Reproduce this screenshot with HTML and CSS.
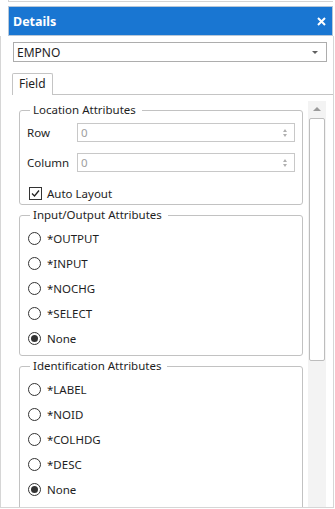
FILE: index.html
```html
<!DOCTYPE html>
<html lang="en">
<head>
    <meta charset="UTF-8">
    <meta name="viewport" content="width=device-width, initial-scale=1.0">
    <title>Details</title>
    <link rel="stylesheet" href="styles.css">
</head>
<body>
    <div class="window">
        <div class="top-strip"></div>

        <!-- Title bar -->
        <div class="titlebar">
            <span class="title">Details</span>
            <svg class="close" width="9" height="9" viewBox="0 0 9 9">
                <path d="M1 1 L8 8 M8 1 L1 8" stroke="#fff" stroke-width="2" fill="none"/>
            </svg>
        </div>

        <div class="panel">
            <div class="select">
                <span>EMPNO</span>
                <span class="select-arrow"></span>
            </div>

            <div class="tabs">
                <div class="tab">Field</div>
                <div class="tab-fill"></div>
            </div>

            <div class="tab-body">
                <div class="groups">
                    <fieldset class="group">
                        <legend>Location Attributes</legend>
                        <div class="field-row">
                            <span class="field-label">Row</span>
                            <div class="spin">
                                <span>0</span>
                                <span class="spin-arrows"><i class="up"></i><i class="down"></i></span>
                            </div>
                        </div>
                        <div class="field-row">
                            <span class="field-label">Column</span>
                            <div class="spin">
                                <span>0</span>
                                <span class="spin-arrows"><i class="up"></i><i class="down"></i></span>
                            </div>
                        </div>
                        <div class="check-row">
                            <span class="checkbox">
                                <svg width="11" height="11" viewBox="0 0 11 11">
                                    <path d="M2 5.5 L4.5 8 L9 2.5" stroke="#222" stroke-width="1.3" fill="none"/>
                                </svg>
                            </span>
                            <span>Auto Layout</span>
                        </div>
                    </fieldset>

                    <fieldset class="group">
                        <legend>Input/Output Attributes</legend>
                        <div class="radio-row"><span class="radio"></span>*OUTPUT</div>
                        <div class="radio-row"><span class="radio"></span>*INPUT</div>
                        <div class="radio-row"><span class="radio"></span>*NOCHG</div>
                        <div class="radio-row"><span class="radio"></span>*SELECT</div>
                        <div class="radio-row"><span class="radio checked"></span>None</div>
                    </fieldset>

                    <fieldset class="group">
                        <legend>Identification Attributes</legend>
                        <div class="radio-row"><span class="radio"></span>*LABEL</div>
                        <div class="radio-row"><span class="radio"></span>*NOID</div>
                        <div class="radio-row"><span class="radio"></span>*COLHDG</div>
                        <div class="radio-row"><span class="radio"></span>*DESC</div>
                        <div class="radio-row"><span class="radio checked"></span>None</div>
                        <div class="radio-row"></div>
                    </fieldset>
                </div>

                <div class="scrollbar">
                    <div class="scroll-up"></div>
                    <div class="scroll-thumb"></div>
                </div>
            </div>
        </div>
    </div>
</body>
</html>
```

FILE: styles.css
```css
* {
    box-sizing: border-box;
}

body {
    margin: 0;
    background: #fff;
    font-family: "Noto Sans", "Open Sans", sans-serif;
    font-size: 11.5px;
    color: #1e1e1e;
}

.window {
    width: 335px;
    height: 509px;
    overflow: hidden;
}

.top-strip {
    margin-left: 8px;
    width: 325px;
    height: 2px;
    border-left: 1px solid #d4d4d4;
    border-bottom: 1px solid #d4d4d4;
}

.titlebar {
    margin: 4px 2px 0 8px;
    height: 30px;
    background: #1976d2;
    border: 1px solid #b7c7d8;
    display: flex;
    align-items: center;
    justify-content: space-between;
    padding: 0 6px 0 4px;
}

.title {
    color: #fff;
    font-weight: bold;
    font-size: 12.5px;
}

.panel {
    width: 334px;
    height: 472px;
    border: 1px solid #d6d6d6;
    border-top: none;
    padding-top: 6px;
}

.select {
    margin-left: 12px;
    width: 314px;
    height: 20px;
    border: 1px solid #adadad;
    display: flex;
    align-items: center;
    justify-content: space-between;
    padding: 0 8px 0 3px;
    font-size: 12px;
}

.select-arrow {
    width: 0;
    height: 0;
    border-left: 3px solid transparent;
    border-right: 3px solid transparent;
    border-top: 3px solid #606060;
}

.tabs {
    margin-top: 11px;
    margin-left: 11px;
    height: 22px;
    display: flex;
}

.tab {
    width: 41px;
    height: 22px;
    border: 1px solid #c4c4c4;
    border-bottom: none;
    border-radius: 2px 2px 0 0;
    padding: 2px 0 0 6px;
    line-height: 16px;
    font-size: 12px;
}

.tab-fill {
    flex: 1;
    border-bottom: 1px solid #c4c4c4;
}

.tab-body {
    display: flex;
    height: 412px;
    padding-left: 18px;
    overflow: hidden;
}

.groups {
    width: 284px;
    padding-top: 7px;
}

.group {
    margin: 0 0 2px 0;
    border: 1px solid #c2c2c2;
    border-radius: 3px;
    padding: 5px 7px 4px 7px;
}

.group legend {
    margin-left: 3px;
    padding: 0 6px 0 3px;
    line-height: 16px;
}

.field-row {
    display: flex;
    align-items: center;
    height: 19px;
    margin-bottom: 11px;
}

.field-label {
    width: 50px;
}

.spin {
    flex: 1;
    height: 19px;
    border: 1px solid #c8c8c8;
    display: flex;
    align-items: center;
    justify-content: space-between;
    padding: 0 7px 0 3px;
    color: #a0a0a0;
}

.spin-arrows {
    display: flex;
    flex-direction: column;
    gap: 2px;
}

.spin-arrows i {
    width: 0;
    height: 0;
    border-left: 2.5px solid transparent;
    border-right: 2.5px solid transparent;
}

.spin-arrows .up {
    border-bottom: 3px solid #b0b0b0;
}

.spin-arrows .down {
    border-top: 3px solid #b0b0b0;
}

.check-row {
    display: flex;
    align-items: center;
    gap: 5px;
    height: 13px;
    margin-top: 15px;
    padding-left: 2px;
}

.checkbox {
    width: 13px;
    height: 13px;
    border: 1px solid #333;
    display: flex;
    align-items: center;
    justify-content: center;
}

.radio-row {
    display: flex;
    align-items: center;
    gap: 6px;
    height: 25px;
    padding-left: 1px;
}

.group .radio-row:first-of-type {
    margin-top: -2px;
}

.radio {
    width: 13px;
    height: 13px;
    border: 1px solid #333;
    border-radius: 50%;
    display: flex;
    align-items: center;
    justify-content: center;
}

.radio.checked::after {
    content: "";
    width: 7px;
    height: 7px;
    border-radius: 50%;
    background: #333;
}

.scrollbar {
    margin-left: 5px;
    margin-top: 6px;
    width: 18px;
    background: #f3f3f3;
}

.scroll-up {
    height: 16px;
    display: flex;
    justify-content: center;
    padding-top: 6px;
}

.scroll-up::before {
    content: "";
    width: 0;
    height: 0;
    border-left: 4px solid transparent;
    border-right: 4px solid transparent;
    border-bottom: 4px solid #9a9a9a;
}

.scroll-thumb {
    margin: 1px 1px 0 1px;
    height: 243px;
    background: #fff;
    border: 1px solid #bdbdbd;
    border-radius: 2px;
}
```
